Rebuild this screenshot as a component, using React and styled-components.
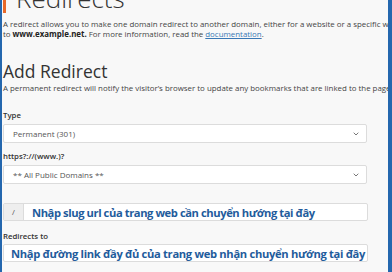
import React from 'react';
import styled, { createGlobalStyle } from 'styled-components';

const Global = createGlobalStyle`
  html, body {
    margin: 0;
    padding: 0;
    background: #f8f8f8;
    font-family: 'Open Sans', 'Liberation Sans', sans-serif;
    color: #333;
  }
  #root {
    width: 392px;
    height: 272px;
    overflow: hidden;
  }
`;

const Page = styled.div`
  display: flex;
  width: 392px;
  height: 272px;
  overflow: hidden;
  background: #f8f8f8;
`;

const SideBar = styled.div`
  flex: 0 0 ${(p) => p.$w}px;
  background: #2467ae;
`;

const Content = styled.div`
  flex: 1;
  min-width: 0;
  padding-left: 1px;
  overflow: hidden;
`;

const PageTitle = styled.h1`
  margin: -17px 0 0 0;
  padding-left: 10px;
  border-left: 3px solid #e8692a;
  font-size: 26px;
  font-weight: 300;
  line-height: 30px;
  color: #333;
  white-space: nowrap;
`;

const Text = styled.p`
  margin: ${(p) => p.$m || '0'};
  font-size: 7.9px;
  line-height: 10px;
  white-space: nowrap;
  color: #444;
  b {
    font-weight: 700;
    color: #222;
  }
  a {
    color: #3a78b5;
    text-decoration: underline;
  }
`;

const SectionTitle = styled.h2`
  margin: 20px 0 0 0;
  font-size: 17.5px;
  font-weight: 400;
  line-height: 24px;
  color: #333;
`;

const Label = styled.div`
  margin: ${(p) => p.$m || '0'};
  font-size: 7.8px;
  font-weight: 600;
  line-height: 10px;
  color: #333;
`;

const SelectBox = styled.div`
  display: flex;
  align-items: center;
  justify-content: space-between;
  width: 364px;
  height: 19px;
  box-sizing: border-box;
  margin-top: 4px;
  padding: 0 7px 0 9px;
  background: #fff;
  border: 1px solid #dcdcdc;
  border-radius: 2px;
  font-size: 8px;
  color: #555;
`;

const InputGroup = styled.div`
  display: flex;
  width: 365px;
  height: 18px;
  box-sizing: border-box;
  margin-top: ${(p) => p.$mt || 0}px;
  border: 1px solid #dcdcdc;
  border-radius: 2px;
  background: #fff;
`;

const Addon = styled.div`
  flex: 0 0 19px;
  display: flex;
  align-items: center;
  justify-content: center;
  background: #eeeeee;
  border-right: 1px solid #dcdcdc;
  font-size: 7.8px;
  color: #555;
`;

const InputText = styled.div`
  flex: 1;
  display: flex;
  align-items: center;
  padding-left: ${(p) => p.$pl || 8}px;
  font-size: 11.2px;
  font-weight: 700;
  letter-spacing: ${(p) => p.$ls || -0.42}px;
  color: #1f5c9c;
  white-space: nowrap;
  overflow: hidden;
`;

const Chevron = () => (
  <svg width="6" height="4" viewBox="0 0 6 4">
    <path d="M0.7 0.7 L3 3 L5.3 0.7" fill="none" stroke="#777" strokeWidth="1" />
  </svg>
);

export default function App() {
  return (
    <Page>
      <Global />
      <SideBar $w={2} />
      <Content>
        <PageTitle>Redirects</PageTitle>
        <Text $m="6px 0 0 0">
          A redirect allows you to make one domain redirect to another domain, either for a website or a specific web page.
        </Text>
        <Text>
          to <b>www.example.net.</b> For more information, read the <a>documentation</a>.
        </Text>
        <SectionTitle>Add Redirect</SectionTitle>
        <Text $m="0 0 0 0">
          A permanent redirect will notify the visitor’s browser to update any bookmarks that are linked to the page.
        </Text>
        <Label $m="17px 0 0 0">Type</Label>
        <SelectBox>
          <span>Permanent (301)</span>
          <Chevron />
        </SelectBox>
        <Label $m="8px 0 0 0">https?://(www.)?</Label>
        <SelectBox>
          <span>** All Public Domains **</span>
          <Chevron />
        </SelectBox>
        <InputGroup $mt={19}>
          <Addon>/</Addon>
          <InputText>Nhập slug url của trang web cần chuyển hướng tại đây</InputText>
        </InputGroup>
        <Label $m="10px 0 0 0">Redirects to</Label>
        <InputGroup $mt={3}>
          <InputText $pl={7} $ls={-0.32}>Nhập đường link đầy đủ của trang web nhận chuyển hướng tại đây</InputText>
        </InputGroup>
      </Content>
      <SideBar $w={4} />
    </Page>
  );
}
